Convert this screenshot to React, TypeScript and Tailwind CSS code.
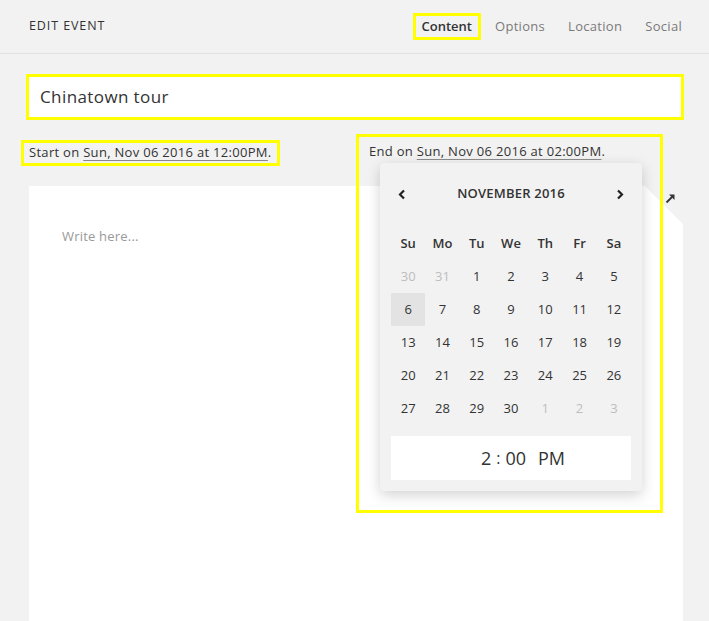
import React from "react";

const font = { fontFamily: '"Open Sans", "Liberation Sans", sans-serif' };

const weeks: { d: number; muted?: boolean; sel?: boolean }[][] = [
  [{ d: 30, muted: true }, { d: 31, muted: true }, { d: 1 }, { d: 2 }, { d: 3 }, { d: 4 }, { d: 5 }],
  [{ d: 6, sel: true }, { d: 7 }, { d: 8 }, { d: 9 }, { d: 10 }, { d: 11 }, { d: 12 }],
  [{ d: 13 }, { d: 14 }, { d: 15 }, { d: 16 }, { d: 17 }, { d: 18 }, { d: 19 }],
  [{ d: 20 }, { d: 21 }, { d: 22 }, { d: 23 }, { d: 24 }, { d: 25 }, { d: 26 }],
  [{ d: 27 }, { d: 28 }, { d: 29 }, { d: 30 }, { d: 1, muted: true }, { d: 2, muted: true }, { d: 3, muted: true }],
];

const dayNames = ["Su", "Mo", "Tu", "We", "Th", "Fr", "Sa"];

function Chevron({ dir }: { dir: "l" | "r" }) {
  return (
    <svg width="8" height="11" viewBox="0 0 8 11" className="block">
      <path
        d={dir === "l" ? "M6 1.5 L2 5.5 L6 9.5" : "M2 1.5 L6 5.5 L2 9.5"}
        fill="none"
        stroke="#222"
        strokeWidth="2.2"
      />
    </svg>
  );
}

export default function App() {
  return (
    <div className="min-h-[621px] w-full bg-[#f2f2f2] text-[#333] overflow-hidden" style={font}>
      {/* Header */}
      <div className="h-[54px] flex items-center justify-between pl-[29px] pr-[27px] border-b border-[#e2e2e2]">
        <div className="text-[12.5px] font-medium tracking-[0.9px] text-[#333]">EDIT EVENT</div>
        <div className="flex items-center gap-[23px] text-[13px] tracking-[0.3px]">
          <span className="-mx-[9px] px-[6px] py-[2px] border-[3px] border-[#ffff00] font-semibold text-[#333] leading-[17px] tracking-normal">
            Content
          </span>
          <span className="text-[#7a7a7a]">Options</span>
          <span className="text-[#7a7a7a]">Location</span>
          <span className="text-[#7a7a7a]">Social</span>
        </div>
      </div>

      {/* Content */}
      <div className="pl-[29px] pr-[26px] pt-[23px]">
        <div className="mr-[2px] h-[40px] bg-white outline-[3px] outline-solid outline-[#ffff00] flex items-center pl-[11px] text-[17px] tracking-[0.4px] text-[#333]">
          Chinatown tour
        </div>

        <div className="relative mt-[23px] h-[26px]">
          <span className="absolute -left-[8px] top-0 h-[26px] flex items-center px-[5px] border-[3px] border-[#ffff00] text-[13px] tracking-[0.3px] text-[#333] whitespace-nowrap">
            Start on&nbsp;
            <span className="underline decoration-[#888] underline-offset-[3px]">Sun, Nov 06 2016 at 12:00PM</span>.
          </span>

          {/* End date with open picker (overlay) */}
          <div className="absolute left-[327px] -top-[6px] z-10 w-[307px] h-[379px] border-[3px] border-[#ffff00] pl-[10px]">
            <div className="h-[26px] flex items-center text-[13px] tracking-[0.3px] text-[#333] whitespace-nowrap pt-[4px]">
              End on&nbsp;
              <span className="underline decoration-[#888] underline-offset-[3px]">Sun, Nov 06 2016 at 02:00PM</span>.
            </div>
            <div className="ml-[11px] w-[262px] rounded-[4px] bg-[#f2f2f2] shadow-[0_4px_14px_rgba(0,0,0,0.18)] px-[11px] pt-[14px] pb-[11px]">
              <div className="h-[34px] flex items-center justify-between px-[7px]">
                <Chevron dir="l" />
                <span className="text-[13px] font-semibold tracking-[0.2px] text-[#333]">NOVEMBER 2016</span>
                <Chevron dir="r" />
              </div>
              <div className="mt-[16px] grid grid-cols-7">
                {dayNames.map((n) => (
                  <div key={n} className="h-[33px] flex items-center justify-center text-[13px] font-semibold text-[#333]">
                    {n}
                  </div>
                ))}
                {weeks.flat().map((c, i) => (
                  <div
                    key={i}
                    className={
                      "h-[33px] flex items-center justify-center text-[13px] " +
                      (c.muted ? "text-[#bdbdbd] " : "text-[#333] ") +
                      (c.sel ? "bg-[#e3e3e3]" : "")
                    }
                  >
                    {c.d}
                  </div>
                ))}
              </div>
              <div className="mt-[11px] h-[44px] bg-white flex items-center justify-center text-[18px] text-[#333] pl-[24px]">
                <span>2</span>
                <span className="mx-[5px] text-[16px]">:</span>
                <span>00</span>
                <span className="ml-[12px]">PM</span>
              </div>
            </div>
          </div>
        </div>

        {/* Editor */}
        <div className="relative mt-[20px] h-[440px]">
          <div
            className="h-full bg-white pl-[33px] pt-[41px] text-[13px] tracking-[0.2px] text-[#999]"
            style={{ clipPath: "polygon(0 0, calc(100% - 38px) 0, 100% 38px, 100% 100%, 0 100%)" }}
          >
            Write here...
          </div>
          <div
            className="absolute right-0 top-0 w-[38px] h-[38px] bg-gradient-to-bl from-[#f2f2f2] from-50% to-[#e6e6e6]"
            style={{ clipPath: "polygon(0 0, 100% 0, 100% 100%)" }}
          />
          <svg className="absolute right-[7px] top-[7px]" width="11" height="11" viewBox="0 0 11 11">
            <path d="M1.5 9.5 L7 4" stroke="#333" strokeWidth="1.8" />
            <path d="M4 1.5 L9.5 1.5 L9.5 7 Z" fill="#333" />
          </svg>
        </div>
      </div>
    </div>
  );
}
